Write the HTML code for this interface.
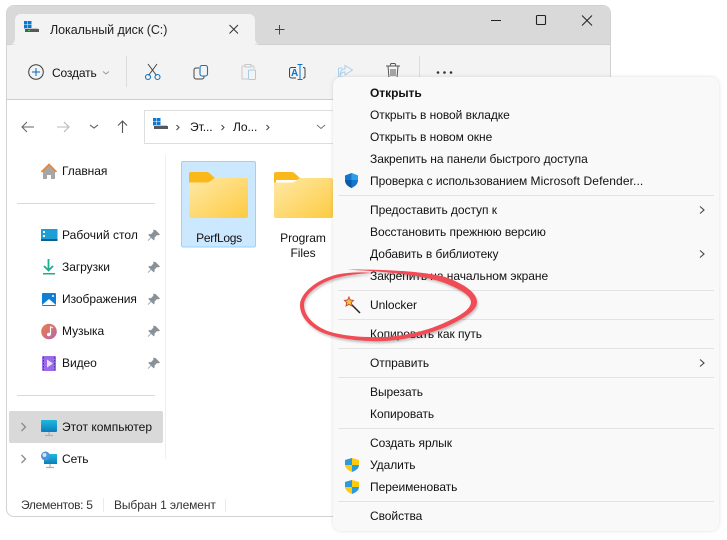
<!DOCTYPE html>
<html lang="ru"><head><meta charset="utf-8"><title>Explorer</title>
<style>
html,body{margin:0;padding:0;width:727px;height:540px;overflow:hidden;background:#fff}
body{position:relative;font-family:"Liberation Sans",sans-serif;font-size:12px;color:#111}
.a{position:absolute}
.t{position:absolute;white-space:nowrap;line-height:16px;letter-spacing:-.05px}
svg{position:absolute;overflow:visible}
.sep{position:absolute;left:338px;width:376px;height:1px;background:#e3e3e3}
</style></head><body>
<!-- window -->
<div class="a" style="left:6px;top:5px;width:603px;height:510px;background:#fff;border:1px solid #d2d2d2;border-radius:8px;overflow:hidden">
<div class="a" style="left:0;top:0;width:603px;height:38px;background:#d9d9d9"></div>
<div class="a" style="left:0;top:38px;width:603px;height:54px;background:#f3f3f3;border-top:1px solid #cfcfcf;border-bottom:1px solid #cdcdcd"></div>
</div>
<div class="a" style="left:15px;top:14px;width:240px;height:31px;background:#f3f3f3;border-radius:6px 6px 0 0"></div>
<svg style="left:0;top:0" width="727" height="540">
<defs><linearGradient id="m" x1="0" x2="1" y1="0" y2="1"><stop offset="0" stop-color="#ea8045"/><stop offset="1" stop-color="#b564ad"/></linearGradient>
<linearGradient id="f" x1="0" x2="1" y1="0" y2="1"><stop offset="0" stop-color="#ffe9a6"/><stop offset="1" stop-color="#fdcb42"/></linearGradient>
<linearGradient id="s" x1="0" x2="0" y1="0" y2="1"><stop offset="0" stop-color="#1fb9de"/><stop offset="1" stop-color="#0b7dbc"/></linearGradient></defs>
<path d="M255 38q0 6 5 6.500h-5zM15 38q0 6-5 6.500h5z" fill="#f3f3f3"/>
<!-- tab drive -->
<g><rect x="24" y="21" width="3.500" height="3.500" fill="#0b78d4"/><rect x="28" y="21" width="3.500" height="3.500" fill="#0b78d4"/><rect x="24" y="25" width="3.500" height="3.500" fill="#0b78d4"/><rect x="28" y="25" width="3.500" height="3.500" fill="#0b78d4"/><path d="M25 29h14v3H25z" fill="#55595c"/><rect x="25" y="28" width="13" height="1" fill="#c9c9c9"/><rect x="28" y="30" width="2" height="1" fill="#30d050"/></g>
<path d="M229.500 25l8.500 8.500M238 25l-8.500 8.500" stroke="#333" stroke-width="1" fill="none"/>
<path d="M279.500 25v9.500M275 29.500h9.500" stroke="#444" stroke-width="1" fill="none"/>
<!-- window controls -->
<path d="M491 20.500h10" stroke="#222" fill="none"/>
<rect x="536.500" y="15.500" width="9" height="9" rx="1" fill="none" stroke="#222" stroke-width="1.100"/>
<path d="M582 15.500l10 10M592 15.500l-10 10" stroke="#222" fill="none"/>
<!-- toolbar -->
<circle cx="36" cy="72" r="7.300" fill="none" stroke="#3a3a3a" stroke-width="1"/>
<path d="M36 68v8M32 72h8" stroke="#0067c0" fill="none"/>
<path d="M103 71.500l3 2.500 3-2.500" stroke="#999" fill="none"/>
<path d="M126.500 56v31" stroke="#dcdcdc"/>
<path d="M148 64l8.500 11.500M157 64l-8.500 11.500" stroke="#444" fill="none"/>
<circle cx="148" cy="77" r="2.500" fill="none" stroke="#0a74c9" stroke-width="1.100"/><circle cx="157.500" cy="77" r="2.500" fill="none" stroke="#0a74c9" stroke-width="1.100"/>
<path d="M199 68h-3a2 2 0 0 0-2 2v7a2 2 0 0 0 2 2h6a2 2 0 0 0 2-2v-1" fill="none" stroke="#444"/>
<rect x="200" y="65.500" width="7.500" height="10.500" rx="2" fill="none" stroke="#0a74c9" stroke-width="1.100"/>
<path d="M245 66h-2a1 1 0 0 0-1 1v12h6" fill="none" stroke="#c8c8c8"/><rect x="245" y="64.500" width="6" height="2.500" fill="none" stroke="#c8c8c8"/>
<path d="M251 66h2a1 1 0 0 1 1 1v2" fill="none" stroke="#c8c8c8"/><rect x="248.500" y="70" width="7" height="9.500" rx="1" fill="#f3f3f3" stroke="#a4cdea"/>
<path d="M296 67.500h-4.500a2 2 0 0 0-2 2v6.500a2 2 0 0 0 2 2h4.500M303 67.500h.5a1.500 1.500 0 0 1 1.500 1.500v7.500a1.500 1.500 0 0 1-1.500 1.500h-.5" fill="none" stroke="#444"/>
<path d="M300 64.500v15M297.500 64.500h5M297.500 79.500h5" stroke="#0a74c9" fill="none"/>
<text x="291" y="76" font-family="Liberation Sans,sans-serif" font-size="10" font-weight="bold" fill="#0a74c9">A</text>
<path d="M343 77h-3.500a1 1 0 0 1-1-1v-7a1 1 0 0 1 1-1h3M345 65.500l7.500 4.500-7.500 5v-3c-3 0-4 1-5 4 0-5 2-7 5-7z" fill="none" stroke="#a9cfee"/>
<path d="M386 66h14M390 66l1-2.500h4l1 2.500M388 66l1 12a1 1 0 0 0 1 1h6a1 1 0 0 0 1-1l1-12M391 69v7M393 69v7M395 69v7" fill="none" stroke="#555"/>
<path d="M419.500 56v21" stroke="#dcdcdc"/>
<circle cx="438" cy="72.500" r="1.300" fill="#333"/><circle cx="444.500" cy="72.500" r="1.300" fill="#333"/><circle cx="451" cy="72.500" r="1.300" fill="#333"/>
<!-- nav -->
<path d="M34 127H22M27 122l-5 5 5 5" fill="none" stroke="#666" stroke-width="1.100"/>
<path d="M57 127h12M64 122l5 5-5 5" fill="none" stroke="#b8b8b8" stroke-width="1.100"/>
<path d="M90 125l4 3 4-3" fill="none" stroke="#666" stroke-width="1.100"/>
<path d="M122.500 133v-12M118 125.500l4.500-4.500 4.500 4.500" fill="none" stroke="#555" stroke-width="1.100"/>
<rect x="144.500" y="110.500" width="190" height="33" fill="#fff" stroke="#dedede"/>
<rect x="153" y="118" width="3.500" height="3.500" fill="#0b78d4"/><rect x="157" y="118" width="3.500" height="3.500" fill="#0b78d4"/><rect x="153" y="122" width="3.500" height="3.500" fill="#0b78d4"/><rect x="157" y="122" width="3.500" height="3.500" fill="#0b78d4"/>
<path d="M154 126h14v3h-14z" fill="#55595c"/><rect x="154" y="125" width="13" height="1" fill="#c9c9c9"/>
<path d="M176.500 125l2.500 2.500-2.500 2.500M221.500 125l2.500 2.500-2.500 2.500M266.500 125l2.500 2.500-2.500 2.500" fill="none" stroke="#444"/>
<path d="M317 125l4 3.500 4-3.500" fill="none" stroke="#777"/>
<!-- sidebar divider -->
<path d="M165.500 155v304" stroke="#eee"/>
<path d="M17 203.500h138M17 395.500h138" stroke="#d9d9d9"/>
<rect x="9" y="411" width="154" height="32" rx="2" fill="#d9d9d9"/>
<!-- home -->
<path d="M43 179h4v-4h4v4h4v-8l-6-6-6 6z" fill="#a6a6a6"/>
<path d="M41.500 172l7.500-7.500 7.500 7.500" fill="none" stroke="#e8883a" stroke-width="1.800"/>
<!-- desktop -->
<rect x="41" y="229" width="16.500" height="12" fill="#1b9fd6"/><rect x="41" y="239" width="16.500" height="2" fill="#0d5f8a"/><rect x="43" y="231" width="2" height="2" fill="#fff"/><rect x="43" y="235" width="2" height="2" fill="#fff"/>
<!-- downloads -->
<path d="M48.500 259v11M44 266l4.500 4.500 4.500-4.500" fill="none" stroke="#1cae8e" stroke-width="1.800"/><rect x="43" y="273" width="12" height="1.500" fill="#1cae8e"/>
<!-- images -->
<rect x="42" y="293" width="14" height="13" rx="1" fill="#0f7fd6"/><path d="M42 305l7-6 7 6z" fill="#fff"/><circle cx="53" cy="296" r="1" fill="#fff"/>
<!-- music -->
<circle cx="49" cy="331.500" r="7.800" fill="url(#m)"/><path d="M50.500 326.500v8" stroke="#fff" stroke-width="1.200"/><circle cx="48.800" cy="334.500" r="1.800" fill="#fff"/><path d="M50.500 326.500l2.500 1.500" stroke="#fff"/>
<!-- video -->
<rect x="42" y="356" width="14" height="15" rx="1" fill="#9a6be8"/><path d="M47 359.500l6 4-6 4z" fill="#e9defa"/><path d="M43.500 357v13M54.500 357v13" stroke="#4c2f9e" stroke-dasharray="1.500 1.500"/>
<!-- pins -->
<path id="p" d="M155.500 230l4.500 4.500-1.200.8h-2l-2.300 2.300v2l-.8.800-2.500-2.500-3 3-.5-.5 3-3-2.500-2.500.8-.8h2l2.300-2.300v-2z" fill="#8a9299"/>
<path transform="translate(0 32)" d="M155.500 230l4.500 4.500-1.200.8h-2l-2.300 2.300v2l-.8.800-2.500-2.500-3 3-.5-.5 3-3-2.500-2.500.8-.8h2l2.300-2.300v-2z" fill="#8a9299"/>
<path transform="translate(0 64)" d="M155.500 230l4.500 4.500-1.200.8h-2l-2.300 2.300v2l-.8.800-2.500-2.500-3 3-.5-.5 3-3-2.500-2.500.8-.8h2l2.300-2.300v-2z" fill="#8a9299"/>
<path transform="translate(0 96)" d="M155.500 230l4.500 4.500-1.200.8h-2l-2.300 2.300v2l-.8.800-2.500-2.500-3 3-.5-.5 3-3-2.500-2.500.8-.8h2l2.300-2.300v-2z" fill="#8a9299"/>
<path transform="translate(0 128)" d="M155.500 230l4.500 4.500-1.200.8h-2l-2.300 2.300v2l-.8.800-2.500-2.500-3 3-.5-.5 3-3-2.500-2.500.8-.8h2l2.300-2.300v-2z" fill="#8a9299"/>
<!-- tree -->
<path d="M21.500 423l4 4-4 4M21.500 455l4 4-4 4" fill="none" stroke="#8a8a8a" stroke-width="1.300"/>
<rect x="41" y="420" width="16" height="12" rx="1" fill="url(#s)"/><path d="M49 432v3M45 435.500h8" stroke="#a3b3bd" stroke-width="1.200"/>
<rect x="44" y="454" width="13" height="10" fill="url(#s)"/><path d="M50 464v3M46 467.500h8" stroke="#a3b3bd" stroke-width="1.200"/><circle cx="45.500" cy="456" r="4.500" fill="#4a94d8"/><circle cx="44.500" cy="455" r="2" fill="#cfe6f7"/>
<path d="M103.500 498v14" stroke="#eaeaea"/><path d="M225.500 499v13" stroke="#eaeaea"/>
<!-- selection & folders -->
<rect x="181.500" y="161.500" width="74" height="85.500" rx="1.500" fill="#cce8ff" stroke="#99d1ff"/>
<g id="folder">
<path d="M189 183v-9a2 2 0 0 1 2-2h16a3 3 0 0 1 2 .8l6 5.200-6 5z" fill="#fbb81a"/>
<path d="M189 182.500h18c1 0 2-.5 3-1l4.500-3.500h31.500a2 2 0 0 1 2 2v36a2 2 0 0 1-2 2h-55a2 2 0 0 1-2-2z" fill="url(#f)"/>
</g>
<g transform="translate(85 0)">
<path d="M189 183v-9a2 2 0 0 1 2-2h16a3 3 0 0 1 2 .8l6 5.200-6 5z" fill="#fbb81a"/>
<path d="M191 180h21v3h-21z" fill="#fff"/>
<path d="M189 182.500h18c1 0 2-.5 3-1l4.500-3.500h31.500a2 2 0 0 1 2 2v36a2 2 0 0 1-2 2h-55a2 2 0 0 1-2-2z" fill="url(#f)"/>
</g>
</svg>
<!-- left text -->
<div class="t" style="left:50px;top:22px;font-size:12.500px;color:#222">Локальный диск (C:)</div>
<div class="t" style="left:52px;top:65px;letter-spacing:-.15px">Создать</div>
<div class="t" style="left:190px;top:119px">Эт...</div>
<div class="t" style="left:233px;top:119px">Ло...</div>
<div class="t" style="left:62px;top:163px">Главная</div>
<div class="t" style="left:62px;top:227px;letter-spacing:.05px">Рабочий стол</div>
<div class="t" style="left:62px;top:259px">Загрузки</div>
<div class="t" style="left:62px;top:291px">Изображения</div>
<div class="t" style="left:62px;top:323px">Музыка</div>
<div class="t" style="left:62px;top:355px">Видео</div>
<div class="t" style="left:62px;top:419px;letter-spacing:.02px">Этот компьютер</div>
<div class="t" style="left:62px;top:451px">Сеть</div>
<div class="t" style="left:21px;top:497px;color:#333;letter-spacing:-.3px">Элементов: 5</div>
<div class="t" style="left:114px;top:497px;color:#333;letter-spacing:-.1px">Выбран 1 элемент</div>
<div class="t" style="left:182px;top:230px;width:74px;text-align:center;letter-spacing:-.3px">PerfLogs</div>
<div class="t" style="left:266px;top:231px;width:74px;text-align:center;white-space:normal;line-height:15px">Program<br>Files</div>
<!-- context menu -->
<div class="a" style="left:333px;top:77px;width:386px;height:454px;background:#f9f9f9;border-radius:8px;box-shadow:0 0 4px rgba(0,0,0,.12)"></div>
<div class="t" style="left:370px;top:85px;font-weight:bold">Открыть</div>
<div class="t" style="left:370px;top:107px">Открыть в новой вкладке</div>
<div class="t" style="left:370px;top:129px">Открыть в новом окне</div>
<div class="t" style="left:370px;top:151px">Закрепить на панели быстрого доступа</div>
<div class="t" style="left:370px;top:173px">Проверка с использованием <span style="letter-spacing:.1px">Microsoft Defender...</span></div>
<div class="sep" style="top:195px"></div>
<div class="t" style="left:370px;top:202px">Предоставить доступ к</div>
<div class="t" style="left:370px;top:224px">Восстановить прежнюю версию</div>
<div class="t" style="left:370px;top:246px">Добавить в библиотеку</div>
<div class="t" style="left:370px;top:268px">Закрепить на начальном экране</div>
<div class="sep" style="top:290px"></div>
<div class="t" style="left:370px;top:297px">Unlocker</div>
<div class="sep" style="top:319px"></div>
<div class="t" style="left:370px;top:326px">Копировать как путь</div>
<div class="sep" style="top:348px"></div>
<div class="t" style="left:370px;top:355px">Отправить</div>
<div class="sep" style="top:377px"></div>
<div class="t" style="left:370px;top:384px">Вырезать</div>
<div class="t" style="left:370px;top:406px">Копировать</div>
<div class="sep" style="top:428px"></div>
<div class="t" style="left:370px;top:435px">Создать ярлык</div>
<div class="t" style="left:370px;top:457px">Удалить</div>
<div class="t" style="left:370px;top:479px">Переименовать</div>
<div class="sep" style="top:501px"></div>
<div class="t" style="left:370px;top:508px">Свойства</div>
<svg style="left:0;top:0" width="727" height="540">
<path d="M700 206.500l4 3.500-4 3.500M700 250.500l4 3.500-4 3.500M700 359.500l4 3.500-4 3.500" fill="none" stroke="#444" stroke-width="1.100"/>
<!-- defender -->
<path d="M351.500 173l6.500 2.500v4.500c0 4-3 6.500-6.500 8-3.500-1.500-6.500-4-6.500-8v-4.500z" fill="#1477cc"/>
<path d="M351.500 173l6.500 2.500v4.500h-6.500z" fill="#2ba0e8"/><path d="M345 180h6.500v8c-3.500-1.500-6.500-4-6.500-8z" fill="#0a5aa8"/>
<!-- uac shields -->
<path d="M352 458l7 2v4.500c0 3.500-3 6-7 7.500-4-1.500-7-4-7-7.500v-4.500z" fill="#ffc90e"/>
<path d="M352 458v7h-7v-5zM352 465h7c0 3.500-3 5.500-7 7z" fill="#2b9be0"/>
<path d="M352 480l7 2v4.500c0 3.500-3 6-7 7.500-4-1.500-7-4-7-7.500v-4.500z" fill="#ffc90e"/>
<path d="M352 480v7h-7v-5zM352 487h7c0 3.500-3 5.500-7 7z" fill="#2b9be0"/>
<!-- wand -->
<path d="M350 303l10 10" stroke="#222" stroke-width="1.500"/>
<path d="M349 297l1.300 3 3.200.3-2.200 2.300.7 3.400-3-1.600-3 1.600.7-3.400-2.300-2.300 3.200-.3z" fill="#f3c33c" stroke="#c9452f" stroke-width=".9"/>
<!-- red ellipse -->
<path style="filter:drop-shadow(1px 2px 1px rgba(0,0,0,.22))" fill="#f14b55" d="M347 269.500C375 269.500 420 270 445 277C462 283 477 292 477 302C477 311 462 319 448 326C430 334 405 340 385 341C365 342 340 339 326 334C312 329 300 318 300 305C300 294 315 280 337 274.500C350 272 362 272 372 273C362 273.500 350 274.500 338 277.500C320 282 304 294 304 305C304 317 316 327 329 331.500C345 336.500 365 337.500 385 337C405 336 430 330 446 322C460 316 471 309 471 302C471 295 458 288 442 282C418 274 380 271.500 347 269.500Z"/>
</svg>
</body></html>
